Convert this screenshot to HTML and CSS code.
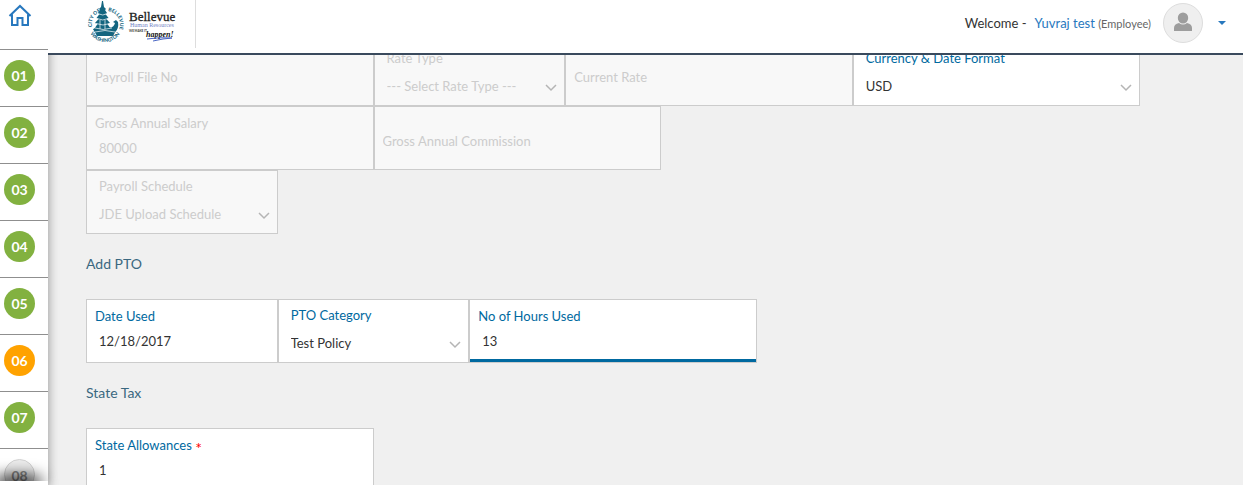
FILE: index.html
```html
<!DOCTYPE html>
<html lang="en">
<head>
<meta charset="utf-8">
<meta name="viewport" content="width=device-width, initial-scale=1">
<title>Payroll details</title>
<link rel="stylesheet" href="styles.css">
</head>
<body>
<div class="app">
  <nav class="steps" aria-label="Steps">
    <a class="home" href="#" aria-label="Home">
      <svg width="24" height="24" viewBox="0 0 24 24" fill="none" stroke="#2878be" stroke-width="2">
        <path d="M1.500 13 12 3l10.500 10M4 11.500V22h5.500v-7h5v7H20V11.500"/>
      </svg>
    </a>
    <a class="step" href="#"><span class="dot">01</span></a>
    <a class="step" href="#"><span class="dot">02</span></a>
    <a class="step" href="#"><span class="dot">03</span></a>
    <a class="step" href="#"><span class="dot">04</span></a>
    <a class="step" href="#"><span class="dot">05</span></a>
    <a class="step" href="#"><span class="dot dot-current">06</span></a>
    <a class="step" href="#"><span class="dot">07</span></a>
    <a class="step" href="#"><span class="dot dot-pending">08</span></a>
    <div class="steps-end"></div>
  </nav>

  <div class="page">
    <header class="topbar">
      <div class="brand">
        <svg class="logo" width="90" height="44" viewBox="0 0 90 44" role="img" aria-label="City of Bellevue Human Resources">
          <defs>
            <path id="arc-left" d="M6 27A13.500 13.500 0 0 1 17 11"/>
            <path id="arc-right" d="M22 11A13.500 13.500 0 0 1 30 34"/>
            <path id="arc-low" d="M4.500 33.500A17 17 0 0 0 34 33.500"/>
          </defs>
          <g class="seal-text">
            <text><textPath href="#arc-left">CITY OF</textPath></text>
            <text><textPath href="#arc-right">BELLEVUE</textPath></text>
            <text><textPath href="#arc-low">WASHINGTON</textPath></text>
          </g>
          <g fill="#14657f">
            <path d="M16 1h1l1 6 2 2-1 1 2 3-1.500 1 3 4-2 1 3.500 4-2.500 1 4 6h-18l4-6-2.500-1 3.500-4-2-1 3-4-1.500-1 2-3-1-1 2-2z"/>
            <path d="M7 29q11-4 24 0l-4 7H11z"/>
            <path d="M24 28q4-1 5-5l-2-1 3-2 2 2q1 6-2 9z"/>
          </g>
          <g fill="none" stroke="#fff" stroke-width="0.700">
            <path d="M13 14q4 2 7 0M11 18.500q6 3 11 0M10 23.500q7 3 14 0M9 28q8 3 17 0M9 32q10-3 20 0M14 20v9M19 20v9"/>
          </g>
          <text class="logo-name" x="43" y="21">Bellevue</text>
          <text class="logo-dept" x="44" y="27">Human Resources</text>
          <text class="logo-tag" x="43" y="32">WE MAKE IT</text>
          <text class="logo-script" x="60" y="37">happen!</text>
          <path d="M61 39q12-2 25-1l-9 1-10 2" fill="none" stroke="#4b67c4"/>
        </svg>
      </div>
      <div class="user">
        <span class="welcome">Welcome -</span>
        <a class="user-name" href="#">Yuvraj test <span class="role">(Employee)</span></a>
        <span class="avatar">
          <svg width="20" height="20" viewBox="0 0 20 20" fill="#9d9d9d">
            <ellipse cx="10" cy="6" rx="5.200" ry="5.500"/>
            <path d="M1 19v-3q0-4 5-5 4 3 8 0 5 1 5 5v3z"/>
          </svg>
        </span>
        <button class="menu" type="button" aria-label="Account menu">
          <svg width="8" height="4" viewBox="0 0 8 4"><path d="M0 0h8L4 4z" fill="#2878be"/></svg>
        </button>
      </div>
    </header>

    <main class="content">
      <form class="form">
        <div class="row">
          <div class="field wide off"><input class="blank" type="text" aria-label="Payroll File No" placeholder="Payroll File No" disabled></div>
          <div class="field pick off">
            <label for="rate-type">Rate Type</label>
            <select id="rate-type" disabled><option>--- Select Rate Type ---</option></select>
          </div>
          <div class="field wide off"><input class="blank" type="text" aria-label="Current Rate" placeholder="Current Rate" disabled></div>
          <div class="field wide pick">
            <label for="currency">Currency &amp; Date Format</label>
            <select id="currency"><option>USD</option></select>
          </div>
        </div>
        <div class="row">
          <div class="field wide off">
            <label for="salary">Gross Annual Salary</label>
            <input id="salary" type="text" value="80000" disabled>
          </div>
          <div class="field wide off"><input class="blank" type="text" aria-label="Gross Annual Commission" placeholder="Gross Annual Commission" disabled></div>
        </div>
        <div class="row">
          <div class="field pick off">
            <label for="schedule">Payroll Schedule</label>
            <select id="schedule" disabled><option>JDE Upload Schedule</option></select>
          </div>
        </div>

        <h2>Add PTO</h2>
        <div class="row">
          <div class="field">
            <label for="date-used">Date Used</label>
            <input id="date-used" type="text" value="12/18/2017">
          </div>
          <div class="field pick">
            <label for="pto-category">PTO Category</label>
            <select id="pto-category"><option>Test Policy</option></select>
          </div>
          <div class="field wide active">
            <label for="hours">No of Hours Used</label>
            <input id="hours" type="text" value="13">
          </div>
        </div>

        <h2>State Tax</h2>
        <div class="row">
          <div class="field wide">
            <label for="allowances">State Allowances <span class="required">*</span></label>
            <input id="allowances" type="text" value="1">
          </div>
        </div>
      </form>
    </main>
  </div>
</div>
</body>
</html>
```

FILE: styles.css
```css
* {
  box-sizing: border-box;
}

body {
  margin: 0;
  background: #f0f0f0;
  color: #333;
  font: 13px/18px Lato, "Liberation Sans", sans-serif;
}

a {
  color: #2878be;
  text-decoration: none;
}

.app {
  display: grid;
  grid-template-columns: 48px 1fr;
  height: 100vh;
}

/* Step rail */
.steps {
  position: relative;
  z-index: 1;
  height: 100vh;
  background: #fff;
  box-shadow: 0 0 10px rgba(0, 0, 0, 0.4);
  clip-path: inset(0 -12px 0 0);
}

.home {
  display: flex;
  height: 50px;
  padding: 3px 8px;
  border-bottom: 1px solid #8f8f8f;
}

.step {
  display: flex;
  height: 57px;
  padding: 10px 4px;
  border-bottom: 1px solid #8f8f8f;
}

.step:nth-last-child(2) {
  border-bottom: 0;
}

.dot {
  width: 31px;
  height: 31px;
  border-radius: 50%;
  background: #82b140;
  color: #fff;
  font-size: 14px;
  font-weight: 700;
  line-height: 32px;
  text-align: center;
}

.dot-current {
  background: #ffa200;
}

.dot-pending {
  border: 1px solid #d3d3d3;
  background: #ececec;
  color: #8a8a8a;
}

.steps-end {
  position: absolute;
  bottom: 0;
  left: 0;
  width: 36px;
  height: 4px;
  background: #fff;
  box-shadow: 0 0 16px 4px #000;
}

.steps-end::after {
  content: "";
  position: absolute;
  inset: 0 -12px 0 0;
  background: #fff;
}

/* Top bar */
.page {
  display: flex;
  flex-direction: column;
  min-width: 0;
  height: 100vh;
}

.topbar {
  position: relative;
  z-index: 2;
  display: flex;
  flex: none;
  justify-content: space-between;
  height: 55px;
  border-bottom: 2px solid #3a4a5d;
  background: #fff;
}

.brand {
  height: 48px;
  padding: 0 19px 0 38px;
  border-right: 1px solid #ddd;
}

.logo {
  display: block;
}

.seal-text {
  fill: #14657f;
  font: 900 5px Lato, sans-serif;
}

.logo-name {
  fill: #222;
  font: 13px "Liberation Serif", serif;
  stroke: #222;
  stroke-width: 0.3px;
}

.logo-dept {
  fill: #7184c5;
  font: 6px "Liberation Serif", serif;
}

.logo-tag {
  fill: #333;
  font: 700 3px Lato, sans-serif;
}

.logo-script {
  fill: #111;
  font: italic 700 8px "Liberation Serif", cursive;
}

.user {
  display: flex;
  align-items: center;
  height: 46px;
  padding-right: 17px;
}

.welcome {
  margin-right: 8px;
}

.user-name {
  margin-right: 12px;
}

.role {
  color: #666;
  font-size: 11px;
}

.avatar {
  display: flex;
  align-items: center;
  justify-content: center;
  width: 40px;
  height: 40px;
  margin-right: 15px;
  padding-bottom: 2px;
  border: 1px solid #ddd;
  border-radius: 50%;
  background: #efefef;
}

.menu {
  display: flex;
  padding: 0;
  border: 0;
  background: none;
}

/* Form */
.content {
  flex: 1;
  min-height: 0;
  padding: 0 7px 0 38px;
  overflow: hidden;
}

.form {
  margin-top: -13px;
}

.row {
  display: grid;
  grid-template-columns: repeat(12, 1fr);
}

.field {
  display: flex;
  flex-direction: column;
  grid-column: span 2;
  gap: 7px;
  height: 64px;
  padding: 7px 8px 0;
  border: 1px solid #ccc;
  background: #fff;
}

.wide {
  grid-column: span 3;
}

.field label {
  color: #0069a0;
}

.field input,
.field select {
  width: 100%;
  height: 18px;
  margin: 0;
  padding: 0 4px;
  border: 0;
  outline: 0;
  background: transparent;
  color: #333;
  font: inherit;
  opacity: 1;
}

.pick {
  gap: 10px;
  padding: 6px 7px 0 12px;
}

.field select {
  padding: 0;
  appearance: none;
  background: url("data:image/svg+xml,%3Csvg xmlns='http://www.w3.org/2000/svg' width='12' height='8'%3E%3Cpath d='M1 1l5 5 5-5' fill='none' stroke='%23b5b5b5' stroke-width='1.500'/%3E%3C/svg%3E") no-repeat right 7px;
}

.off {
  background: #f8f8f8;
}

.off label,
.off input,
.off select,
.off input::placeholder {
  color: #ccc;
}

.field .blank {
  height: 54px;
  padding: 0;
}

.active {
  box-shadow: inset 0 -3px #0069a0;
}

.required {
  color: #f00;
  font-size: 16px;
  line-height: 0;
  vertical-align: sub;
}

h2 {
  margin: 21px 0 26px;
  color: #3a6880;
  font-size: 14px;
  font-weight: 400;
  line-height: 18px;
}
```
